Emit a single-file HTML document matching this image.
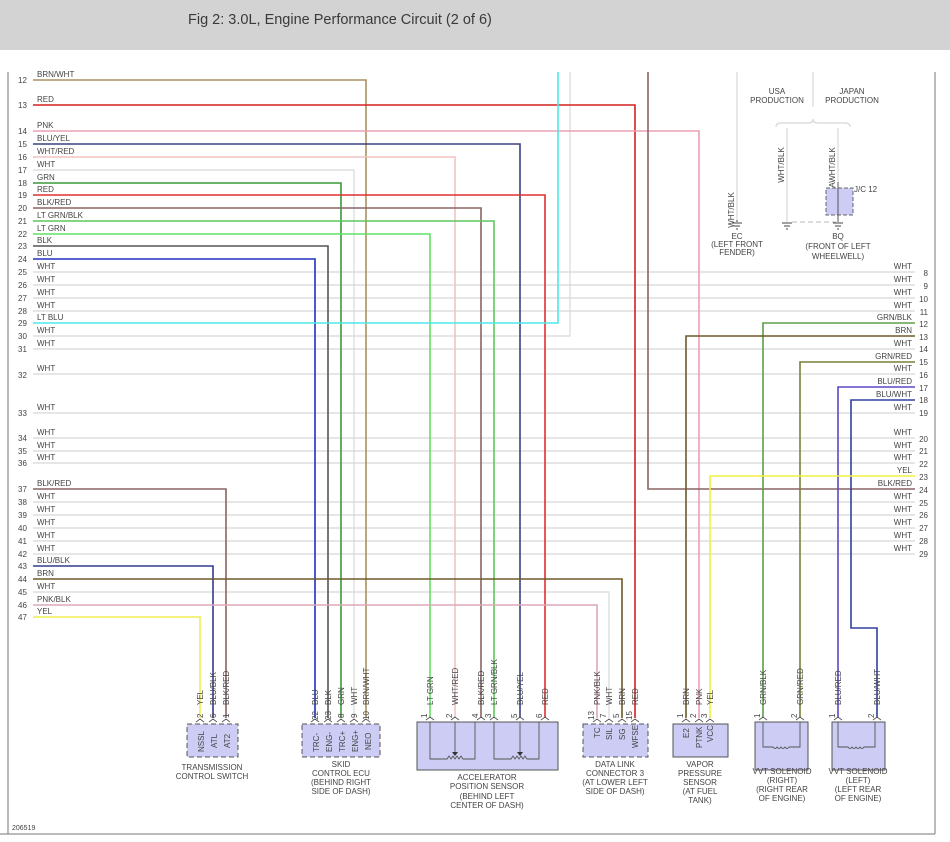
<!DOCTYPE html>
<html><head><meta charset="utf-8"><style>
html,body{margin:0;padding:0;background:#fff;width:950px;height:842px;overflow:hidden}
.hdr{position:absolute;left:0;top:0;width:950px;height:50px;background:#d3d3d3}
.hdr span{position:absolute;left:188px;top:12px;font:14.5px "Liberation Sans",sans-serif;color:#3a3a3a}
svg{position:absolute;left:0;top:0}
text{font-family:"Liberation Sans",sans-serif;font-size:8px;fill:#444}
.w{fill:none}
</style></head><body>
<div class="hdr"><span>Fig 2: 3.0L, Engine Performance Circuit (2 of 6)</span></div>
<svg width="950" height="842" viewBox="0 0 950 842">
<line x1="8" y1="72" x2="8" y2="834" stroke="#777" stroke-width="1"/>
<line x1="0" y1="834" x2="935" y2="834" stroke="#777" stroke-width="1"/>
<line x1="935" y1="72" x2="935" y2="834" stroke="#777" stroke-width="1"/>
<text x="12" y="830" style="font-size:7px">206519</text>

<g stroke="#d8d8d8" stroke-width="1.2">
<line x1="33" y1="272" x2="915" y2="272"/><line x1="33" y1="285" x2="915" y2="285"/>
<line x1="33" y1="298" x2="915" y2="298"/><line x1="33" y1="311" x2="915" y2="311"/>
<line x1="33" y1="349" x2="915" y2="349"/><line x1="33" y1="374" x2="915" y2="374"/>
<line x1="33" y1="413" x2="915" y2="413"/><line x1="33" y1="438" x2="915" y2="438"/>
<line x1="33" y1="451" x2="915" y2="451"/><line x1="33" y1="463" x2="915" y2="463"/>
<line x1="33" y1="502" x2="915" y2="502"/><line x1="33" y1="515" x2="915" y2="515"/>
<line x1="33" y1="528" x2="915" y2="528"/><line x1="33" y1="541" x2="915" y2="541"/>
<line x1="33" y1="554" x2="915" y2="554"/>
<polyline class="w" points="33,170 354,170 354,718"/>
<polyline class="w" points="33,336 570,336 570,72"/>
<polyline class="w" points="33,592 609,592 609,718"/>
<polyline class="w" points="737,72 737,222"/>
<polyline class="w" points="813,72 813,107"/>
<polyline class="w" points="787,128 787,222"/>
<polyline class="w" points="838,128 838,182"/>
<path class="w" d="M776,127 q0,-4 5,-4 h27 q5,0 5,-4 q0,4 5,4 h27 q5,0 5,4"/>
</g>
<line x1="792" y1="222" x2="836" y2="222" stroke="#bbb" stroke-dasharray="5,3"/>

<g class="w" stroke-width="1.6">
<polyline points="33,80 366,80 366,718" stroke="#a8925e"/>
<polyline points="33,105 635,105 635,718" stroke="#d42020"/>
<polyline points="33,131 699,131 699,718" stroke="#eaa0b4"/>
<polyline points="33,144 520,144 520,718" stroke="#3a4080"/>
<polyline points="33,157 455,157 455,718" stroke="#f0c4c4"/>
<polyline points="33,183 341,183 341,718" stroke="#3a9a3a"/>
<polyline points="33,195 545,195 545,718" stroke="#e03030"/>
<polyline points="33,208 481,208 481,718" stroke="#8a6464"/>
<polyline points="33,221 494,221 494,718" stroke="#5cc85c"/>
<polyline points="33,234 430,234 430,718" stroke="#62e062"/>
<polyline points="33,246 328,246 328,718" stroke="#555"/>
<polyline points="33,259 315,259 315,718" stroke="#2030c0"/>
<polyline points="33,323 558,323 558,72" stroke="#4ee8e8"/>
<polyline points="33,489 226,489 226,718" stroke="#8a6464"/>
<polyline points="915,489 648,489 648,72" stroke="#8a6464"/>
<polyline points="33,566 213,566 213,718" stroke="#343a90"/>
<polyline points="33,579 622,579 622,718" stroke="#6b5a28"/>
<polyline points="33,605 597,605 597,718" stroke="#dca8b8"/>
<polyline points="33,617 200,617 200,718" stroke="#eeee50"/>
<polyline points="915,323 763,323 763,718" stroke="#5aa048"/>
<polyline points="915,336 686,336 686,718" stroke="#6b5a28"/>
<polyline points="915,362 800,362 800,718" stroke="#7a8038"/>
<polyline points="915,387 838,387 838,718" stroke="#5a48c8"/>
<polyline points="915,400 851,400 851,628 877,628 877,718" stroke="#3040a0"/>
<polyline points="915,476 710,476 710,718" stroke="#f0f040"/>
</g>

<g>
<text x="37" y="77">BRN/WHT</text><text x="18" y="83">12</text>
<text x="37" y="102">RED</text><text x="18" y="108">13</text>
<text x="37" y="128">PNK</text><text x="18" y="134">14</text>
<text x="37" y="141">BLU/YEL</text><text x="18" y="147">15</text>
<text x="37" y="154">WHT/RED</text><text x="18" y="160">16</text>
<text x="37" y="167">WHT</text><text x="18" y="173">17</text>
<text x="37" y="180">GRN</text><text x="18" y="186">18</text>
<text x="37" y="192">RED</text><text x="18" y="198">19</text>
<text x="37" y="205">BLK/RED</text><text x="18" y="211">20</text>
<text x="37" y="218">LT GRN/BLK</text><text x="18" y="224">21</text>
<text x="37" y="231">LT GRN</text><text x="18" y="237">22</text>
<text x="37" y="243">BLK</text><text x="18" y="249">23</text>
<text x="37" y="256">BLU</text><text x="18" y="262">24</text>
<text x="37" y="269">WHT</text><text x="18" y="275">25</text>
<text x="37" y="282">WHT</text><text x="18" y="288">26</text>
<text x="37" y="295">WHT</text><text x="18" y="301">27</text>
<text x="37" y="308">WHT</text><text x="18" y="314">28</text>
<text x="37" y="320">LT BLU</text><text x="18" y="326">29</text>
<text x="37" y="333">WHT</text><text x="18" y="339">30</text>
<text x="37" y="346">WHT</text><text x="18" y="352">31</text>
<text x="37" y="371">WHT</text><text x="18" y="378">32</text>
<text x="37" y="410">WHT</text><text x="18" y="416">33</text>
<text x="37" y="435">WHT</text><text x="18" y="441">34</text>
<text x="37" y="448">WHT</text><text x="18" y="454">35</text>
<text x="37" y="460">WHT</text><text x="18" y="466">36</text>
<text x="37" y="486">BLK/RED</text><text x="18" y="492">37</text>
<text x="37" y="499">WHT</text><text x="18" y="505">38</text>
<text x="37" y="512">WHT</text><text x="18" y="518">39</text>
<text x="37" y="525">WHT</text><text x="18" y="531">40</text>
<text x="37" y="538">WHT</text><text x="18" y="544">41</text>
<text x="37" y="551">WHT</text><text x="18" y="557">42</text>
<text x="37" y="563">BLU/BLK</text><text x="18" y="569">43</text>
<text x="37" y="576">BRN</text><text x="18" y="582">44</text>
<text x="37" y="589">WHT</text><text x="18" y="595">45</text>
<text x="37" y="602">PNK/BLK</text><text x="18" y="608">46</text>
<text x="37" y="614">YEL</text><text x="18" y="620">47</text>
</g>
<g text-anchor="end">
<text x="912" y="269">WHT</text><text x="928" y="276">8</text>
<text x="912" y="282">WHT</text><text x="928" y="289">9</text>
<text x="912" y="295">WHT</text><text x="928" y="302">10</text>
<text x="912" y="308">WHT</text><text x="928" y="315">11</text>
<text x="912" y="320">GRN/BLK</text><text x="928" y="327">12</text>
<text x="912" y="333">BRN</text><text x="928" y="340">13</text>
<text x="912" y="346">WHT</text><text x="928" y="352">14</text>
<text x="912" y="359">GRN/RED</text><text x="928" y="365">15</text>
<text x="912" y="371">WHT</text><text x="928" y="378">16</text>
<text x="912" y="384">BLU/RED</text><text x="928" y="391">17</text>
<text x="912" y="397">BLU/WHT</text><text x="928" y="403">18</text>
<text x="912" y="410">WHT</text><text x="928" y="416">19</text>
<text x="912" y="435">WHT</text><text x="928" y="442">20</text>
<text x="912" y="448">WHT</text><text x="928" y="454">21</text>
<text x="912" y="460">WHT</text><text x="928" y="467">22</text>
<text x="912" y="473">YEL</text><text x="928" y="480">23</text>
<text x="912" y="486">BLK/RED</text><text x="928" y="493">24</text>
<text x="912" y="499">WHT</text><text x="928" y="506">25</text>
<text x="912" y="512">WHT</text><text x="928" y="518">26</text>
<text x="912" y="525">WHT</text><text x="928" y="531">27</text>
<text x="912" y="538">WHT</text><text x="928" y="544">28</text>
<text x="912" y="551">WHT</text><text x="928" y="557">29</text>
</g>

<g text-anchor="middle">
<text x="777" y="94">USA</text><text x="777" y="103">PRODUCTION</text>
<text x="852" y="94">JAPAN</text><text x="852" y="103">PRODUCTION</text>
<text transform="translate(734,210) rotate(-90)">WHT/BLK</text>
<text transform="translate(784,165) rotate(-90)">WHT/BLK</text>
<text transform="translate(835,165) rotate(-90)">WHT/BLK</text>
<text transform="translate(835,185) rotate(-90)">A</text>
<text x="737" y="239">EC</text><text x="737" y="247">(LEFT FRONT</text><text x="737" y="255">FENDER)</text>
<text x="838" y="239">BQ</text><text x="838" y="249">(FRONT OF LEFT</text><text x="838" y="259">WHEELWELL)</text>
</g>
<text x="854" y="192">J/C 12</text>
<rect x="826" y="188" width="27" height="27" fill="#ccccf4" stroke="#666" stroke-dasharray="4,2"/>
<line x1="838" y1="182" x2="838" y2="222" stroke="#555"/>
<g stroke="#444" stroke-width="1">
<path d="M732,223h10M734,226h6M736,229h2M737,222v-2"/>
<path d="M782,223h10M784,226h6M786,229h2"/>
<path d="M833,223h10M835,226h6M837,229h2"/>
</g>

<g stroke="#555" fill="#ccccf4">
<rect x="187" y="724" width="51" height="33" stroke-dasharray="5,3"/>
<rect x="302" y="724" width="78" height="33" stroke-dasharray="5,3"/>
<rect x="417" y="722" width="141" height="48"/>
<rect x="583" y="724" width="65" height="33" stroke-dasharray="5,3"/>
<rect x="673" y="724" width="55" height="33"/>
<rect x="755" y="722" width="53" height="48"/>
<rect x="832" y="722" width="53" height="48"/>
</g>
<g fill="none" stroke="#555" stroke-width="0.9">
<path d="M196,722l4,-3l4,3M209,722l4,-3l4,3M222,722l4,-3l4,3"/>
<path d="M311,722l4,-3l4,3M324,722l4,-3l4,3M337,722l4,-3l4,3M350,722l4,-3l4,3M362,722l4,-3l4,3"/>
<path d="M426,720l4,-3l4,3M451,720l4,-3l4,3M477,720l4,-3l4,3M490,720l4,-3l4,3M516,720l4,-3l4,3M541,720l4,-3l4,3"/>
<path d="M593,722l4,-3l4,3M605,722l4,-3l4,3M618,722l4,-3l4,3M631,722l4,-3l4,3"/>
<path d="M682,722l4,-3l4,3M695,722l4,-3l4,3M706,722l4,-3l4,3"/>
<path d="M759,720l4,-3l4,3M796,720l4,-3l4,3M834,720l4,-3l4,3M873,720l4,-3l4,3"/>
<path d="M430,722v37h17l2,-3l2,3l2,-3l2,3l2,-3l2,3l2,-3l2,3h12v-37"/>
<path d="M494,722v37h17l2,-3l2,3l2,-3l2,3l2,-3l2,3l2,-3l2,3h12v-37"/>
<path d="M455,722v31M520,722v31"/>
<path d="M763,722v25h10q2,3 4,0q2,3 4,0q2,3 4,0q2,3 4,0h11v-25"/>
<path d="M838,722v25h10q2,3 4,0q2,3 4,0q2,3 4,0q2,3 4,0h11v-25"/>
</g>
<path d="M452,752l3,4l3,-4zM517,752l3,4l3,-4" fill="#333"/>

<g style="font-size:7.5px">
<text transform="translate(203,705) rotate(-90)">YEL</text>
<text transform="translate(216,705) rotate(-90)">BLU/BLK</text>
<text transform="translate(229,705) rotate(-90)">BLK/RED</text>
<text transform="translate(203,718) rotate(-90)">2</text><text transform="translate(216,718) rotate(-90)">6</text><text transform="translate(229,718) rotate(-90)">1</text>
<text transform="translate(204,752) rotate(-90)">NSSL</text><text transform="translate(217,748) rotate(-90)">ATL</text><text transform="translate(230,748) rotate(-90)">AT2</text>

<text transform="translate(318,705) rotate(-90)">BLU</text>
<text transform="translate(331,705) rotate(-90)">BLK</text>
<text transform="translate(344,705) rotate(-90)">GRN</text>
<text transform="translate(357,705) rotate(-90)">WHT</text>
<text transform="translate(369,705) rotate(-90)">BRN/WHT</text>
<text transform="translate(318,720) rotate(-90)">22</text><text transform="translate(331,720) rotate(-90)">23</text><text transform="translate(344,718) rotate(-90)">8</text><text transform="translate(357,718) rotate(-90)">9</text><text transform="translate(369,720) rotate(-90)">10</text>
<text transform="translate(319,752) rotate(-90)">TRC-</text><text transform="translate(332,752) rotate(-90)">ENG-</text><text transform="translate(345,752) rotate(-90)">TRC+</text><text transform="translate(358,752) rotate(-90)">ENG+</text><text transform="translate(371,750) rotate(-90)">NEO</text>

<text transform="translate(433,705) rotate(-90)">LT GRN</text>
<text transform="translate(458,705) rotate(-90)">WHT/RED</text>
<text transform="translate(484,705) rotate(-90)">BLK/RED</text>
<text transform="translate(497,705) rotate(-90)">LT GRN/BLK</text>
<text transform="translate(523,705) rotate(-90)">BLU/YEL</text>
<text transform="translate(548,705) rotate(-90)">RED</text>
<text transform="translate(427,718) rotate(-90)">1</text><text transform="translate(452,718) rotate(-90)">2</text><text transform="translate(478,718) rotate(-90)">4</text><text transform="translate(491,718) rotate(-90)">3</text><text transform="translate(517,718) rotate(-90)">5</text><text transform="translate(542,718) rotate(-90)">6</text>

<text transform="translate(600,705) rotate(-90)">PNK/BLK</text>
<text transform="translate(612,705) rotate(-90)">WHT</text>
<text transform="translate(625,705) rotate(-90)">BRN</text>
<text transform="translate(638,705) rotate(-90)">RED</text>
<text transform="translate(594,720) rotate(-90)">13</text><text transform="translate(606,718) rotate(-90)">7</text><text transform="translate(619,718) rotate(-90)">5</text><text transform="translate(632,720) rotate(-90)">15</text>
<text transform="translate(600,738) rotate(-90)">TC</text><text transform="translate(612,740) rotate(-90)">SIL</text><text transform="translate(625,740) rotate(-90)">SG</text><text transform="translate(638,748) rotate(-90)">WFSE</text>

<text transform="translate(689,705) rotate(-90)">BRN</text>
<text transform="translate(702,705) rotate(-90)">PNK</text>
<text transform="translate(713,705) rotate(-90)">YEL</text>
<text transform="translate(683,718) rotate(-90)">1</text><text transform="translate(696,718) rotate(-90)">2</text><text transform="translate(707,718) rotate(-90)">3</text>
<text transform="translate(689,738) rotate(-90)">E2</text><text transform="translate(702,748) rotate(-90)">PTNK</text><text transform="translate(713,742) rotate(-90)">VCC</text>

<text transform="translate(766,705) rotate(-90)">GRN/BLK</text>
<text transform="translate(803,705) rotate(-90)">GRN/RED</text>
<text transform="translate(841,705) rotate(-90)">BLU/RED</text>
<text transform="translate(880,705) rotate(-90)">BLU/WHT</text>
<text transform="translate(760,718) rotate(-90)">1</text><text transform="translate(797,718) rotate(-90)">2</text><text transform="translate(835,718) rotate(-90)">1</text><text transform="translate(874,718) rotate(-90)">2</text>
</g>

<g text-anchor="middle">
<text x="212" y="770">TRANSMISSION</text><text x="212" y="779">CONTROL SWITCH</text>
<text x="341" y="767">SKID</text><text x="341" y="776">CONTROL ECU</text><text x="341" y="785">(BEHIND RIGHT</text><text x="341" y="794">SIDE OF DASH)</text>
<text x="487" y="780">ACCELERATOR</text><text x="487" y="789">POSITION SENSOR</text><text x="487" y="799">(BEHIND LEFT</text><text x="487" y="808">CENTER OF DASH)</text>
<text x="615" y="767">DATA LINK</text><text x="615" y="776">CONNECTOR 3</text><text x="615" y="785">(AT LOWER LEFT</text><text x="615" y="794">SIDE OF DASH)</text>
<text x="700" y="767">VAPOR</text><text x="700" y="776">PRESSURE</text><text x="700" y="785">SENSOR</text><text x="700" y="794">(AT FUEL</text><text x="700" y="803">TANK)</text>
<text x="782" y="774">VVT SOLENOID</text><text x="782" y="783">(RIGHT)</text><text x="782" y="792">(RIGHT REAR</text><text x="782" y="801">OF ENGINE)</text>
<text x="858" y="774">VVT SOLENOID</text><text x="858" y="783">(LEFT)</text><text x="858" y="792">(LEFT REAR</text><text x="858" y="801">OF ENGINE)</text>
</g>
</svg>
</body></html>
